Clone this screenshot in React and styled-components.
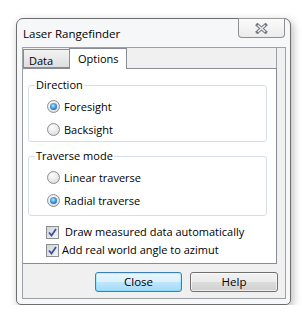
import React from 'react'
import styled, { createGlobalStyle } from 'styled-components'

const GlobalStyle = createGlobalStyle`
    html, body {
        margin: 0;
        padding: 0;
        background: #ffffff;
    }
    body {
        font-family: "Segoe UI", "Open Sans", "Liberation Sans", sans-serif;
        font-size: 11px;
        color: #000;
    }
`

const Page = styled.div`
    padding: 18px 0 0 16px;
`

const Window = styled.div`
    box-sizing: border-box;
    width: 275px;
    height: 287px;
    border: 1px solid #6e6e6e;
    border-radius: 7px 7px 5px 5px;
    background: #f6f7f8;
    box-shadow: 2px 3px 9px rgba(0, 0, 0, 0.28);
    display: flex;
    flex-direction: column;
`

const TitleBar = styled.div`
    display: flex;
    align-items: flex-start;
    justify-content: space-between;
    height: 28px;
`

const Title = styled.div`
    padding: 7px 0 0 6px;
    font-size: 11.5px;
    line-height: 16px;
`

const CloseBox = styled.div`
    box-sizing: border-box;
    width: 47px;
    height: 20px;
    margin: -1px 5px 0 0;
    border: 1px solid #8d8f92;
    border-top-color: #9a9a9a;
    border-radius: 0 0 4px 4px;
    background: linear-gradient(#fbfbfb, #ececed);
    display: flex;
    align-items: center;
    justify-content: center;
`

const Client = styled.div`
    box-sizing: border-box;
    flex: 1;
    margin: 0 4px 5px 5px;
    border: 1px solid #9da1a6;
    background: #f0f0f0;
    display: flex;
    flex-direction: column;
`

const TabStrip = styled.div`
    display: flex;
    align-items: flex-end;
    height: 20px;
    margin-right: 8px;
    border-right: 1px solid #9da1a6;
`

const Tab = styled.div`
    box-sizing: border-box;
    height: ${p => (p.$active ? '21px' : '19px')};
    width: ${p => p.$w}px;
    margin-bottom: ${p => (p.$active ? '-1px' : '0')};
    margin-left: ${p => (p.$active ? '-1px' : '0')};
    border: 1px solid #898c95;
    border-bottom: ${p => (p.$active ? 'none' : '1px solid #898c95')};
    background: ${p => (p.$active ? '#ffffff' : 'linear-gradient(#f3f3f3, #dedede)')};
    padding: ${p => (p.$active ? '2px 0 0 8px' : '3px 0 0 5px')};
    line-height: 15px;
    position: relative;
    z-index: ${p => (p.$active ? 1 : 0)};
`

const Panel = styled.div`
    box-sizing: border-box;
    height: 196px;
    margin-right: 8px;
    border: 1px solid #898c95;
    border-left: none;
    background: #ffffff;
    padding: 8px 9px 0 5px;
`

const Group = styled.fieldset`
    margin: 0 0 ${p => p.$gap}px 0;
    padding: 2px 0 ${p => p.$pb}px 0;
    border: 1px solid #d5dfe5;
    border-radius: 3px;
    min-width: 0;
`

const Legend = styled.legend`
    margin-left: 6px;
    padding: 0 1px;
    line-height: 16px;
`

const OptionRow = styled.label`
    display: flex;
    align-items: center;
    height: ${p => p.$h}px;
    padding-left: ${p => p.$indent}px;
    line-height: 16px;
    white-space: pre;
`

const Radio = styled.span`
    box-sizing: border-box;
    width: 13px;
    height: 13px;
    margin-right: 4px;
    border-radius: 50%;
    border: 1px solid #8c8e93;
    background: radial-gradient(circle at 40% 35%, #ffffff 0%, #e6e6e6 60%, #c9cacc 100%);
    display: flex;
    align-items: center;
    justify-content: center;
    &::after {
        content: '';
        display: ${p => (p.$checked ? 'block' : 'none')};
        width: 7px;
        height: 7px;
        border-radius: 50%;
        background: radial-gradient(circle at 45% 40%, #bfe8ff 0%, #3d9be0 45%, #15497d 100%);
    }
`

const Check = styled.span`
    box-sizing: border-box;
    width: 13px;
    height: 13px;
    margin-right: ${p => p.$gap}px;
    border: 1px solid #8c8e93;
    background: linear-gradient(135deg, #cfd3d8, #f4f5f6);
    display: flex;
    align-items: center;
    justify-content: center;
`

const Checks = styled.div`
    padding-top: 7px;
`

const ButtonBar = styled.div`
    display: flex;
    justify-content: flex-end;
    gap: 8px;
    padding: 8px 7px 0 0;
`

const Button = styled.button`
    box-sizing: border-box;
    width: ${p => p.$w}px;
    height: 20px;
    padding: 0;
    font: inherit;
    font-size: 11.5px;
    line-height: 16px;
    color: #000;
    border-radius: 3px;
    border: 1px solid ${p => (p.$primary ? '#3c7fb1' : '#707070')};
    background: ${p => (p.$primary
        ? 'linear-gradient(#eaf6fd 0%, #d9f0fc 50%, #bee6fd 51%, #a7d9f5 100%)'
        : 'linear-gradient(#f2f2f2 0%, #ebebeb 50%, #dddddd 51%, #cfcfcf 100%)')};
    box-shadow: inset 0 0 0 1px ${p => (p.$primary ? '#48e0fe55' : '#ffffffaa')};
`

const CloseGlyph = () => (
    <svg width="13" height="11" viewBox="0 0 13 11">
        <path d="M2.5 2 L10.5 9 M10.5 2 L2.5 9" stroke="#767a80" strokeWidth="3.4" strokeLinecap="square" />
        <path d="M2.8 2.3 L10.2 8.7 M10.2 2.3 L2.8 8.7" stroke="#f4f4f4" strokeWidth="1.3" />
    </svg>
)

const CheckMark = () => (
    <svg width="9" height="9" viewBox="0 0 9 9">
        <path d="M1 4.5 L3.5 7.5 L8 1" fill="none" stroke="#3b4fa0" strokeWidth="1.7" />
    </svg>
)

const App = () => {
    return (
        <Page>
            <GlobalStyle />
            <Window>
                <TitleBar>
                    <Title>Laser Rangefinder</Title>
                    <CloseBox><CloseGlyph /></CloseBox>
                </TitleBar>
                <Client>
                    <TabStrip>
                        <Tab $w={47}>Data</Tab>
                        <Tab $w={58} $active>Options</Tab>
                    </TabStrip>
                    <Panel>
                        <Group $gap={6} $pb={0}>
                            <Legend>Direction</Legend>
                            <OptionRow $h={23} $indent={18}><Radio $checked />Foresight</OptionRow>
                            <OptionRow $h={23} $indent={18}><Radio />Backsight</OptionRow>
                        </Group>
                        <Group $gap={0} $pb={3}>
                            <Legend>Traverse mode</Legend>
                            <OptionRow $h={23} $indent={18}><Radio />Linear traverse</OptionRow>
                            <OptionRow $h={23} $indent={18}><Radio $checked />Radial traverse</OptionRow>
                        </Group>
                        <Checks>
                            <OptionRow $h={18} $indent={18}><Check $gap={6}><CheckMark /></Check>Draw measured data automatically</OptionRow>
                            <OptionRow $h={18} $indent={18}><Check $gap={3}><CheckMark /></Check>Add real world angle to azimut</OptionRow>
                        </Checks>
                    </Panel>
                    <ButtonBar>
                        <Button $w={87} $primary>Close</Button>
                        <Button $w={88}>Help</Button>
                    </ButtonBar>
                </Client>
            </Window>
        </Page>
    )
}

export default App
